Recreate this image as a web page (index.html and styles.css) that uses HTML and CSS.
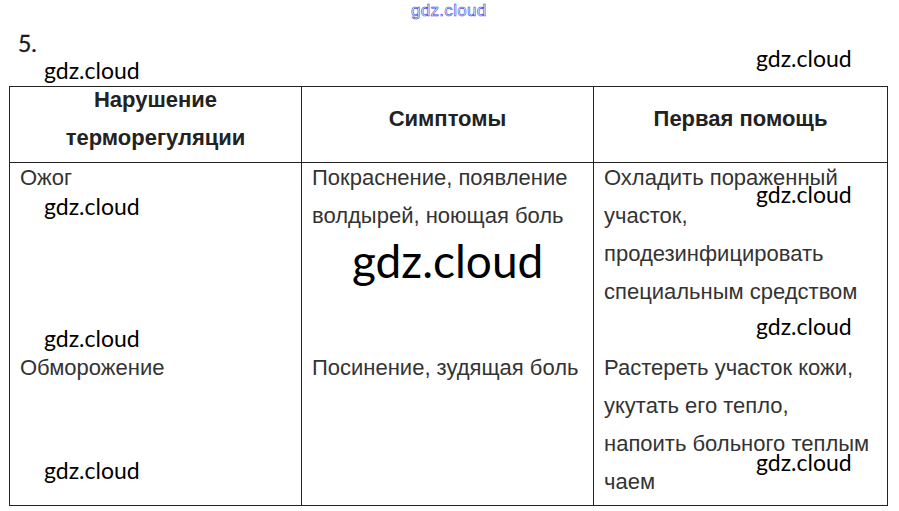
FILE: index.html
```html
<!DOCTYPE html>
<html lang="ru">
<head>
<meta charset="utf-8">
<title>5.</title>
<link rel="stylesheet" href="styles.css">
</head>
<body>
<div class="page">
  <div class="task">5.</div>
  <table class="grid">
    <colgroup><col class="c1"><col class="c2"><col class="c3"></colgroup>
    <thead>
      <tr class="head">
        <th><div class="hin">Нарушение<br>терморегуляции</div></th>
        <th><div class="hin">Симптомы</div></th>
        <th><div class="hin">Первая помощь</div></th>
      </tr>
    </thead>
    <tbody>
      <tr class="r1">
        <td><div class="in">Ожог</div></td>
        <td><div class="in">Покраснение, появление<br>волдырей, ноющая боль</div></td>
        <td><div class="in">Охладить пораженный<br>участок,<br>продезинфицировать<br>специальным средством</div></td>
      </tr>
      <tr class="r2">
        <td><div class="in">Обморожение</div></td>
        <td><div class="in">Посинение, зудящая боль</div></td>
        <td><div class="in">Растереть участок кожи,<br>укутать его тепло,<br>напоить больного теплым<br>чаем</div></td>
      </tr>
    </tbody>
  </table>

  <span class="wm-top">gdz.cloud</span>
  <span class="wm w1">gdz.cloud</span>
  <span class="wm w2">gdz.cloud</span>
  <span class="wm w3">gdz.cloud</span>
  <span class="wm w4">gdz.cloud</span>
  <span class="wm w5">gdz.cloud</span>
  <span class="wm w6">gdz.cloud</span>
  <span class="wm w7">gdz.cloud</span>
  <span class="wm w8">gdz.cloud</span>
  <span class="wm big">gdz.cloud</span>
</div>
</body>
</html>
```

FILE: styles.css
```css
html, body {
  margin: 0;
  padding: 0;
  background: #ffffff;
}
.page {
  position: relative;
  width: 899px;
  height: 511px;
  overflow: hidden;
}
.task {
  font-family: Lato, "Open Sans", sans-serif;
  font-size: 23px;
  color: #1a1a1a;
  padding: 30px 0 0 18px;
  height: 26px;
  line-height: 26px;
  -webkit-text-stroke: 0.3px #1a1a1a;
}
.grid {
  margin: 30px 0 0 9px;
  border-collapse: collapse;
  table-layout: fixed;
  width: 878px;
  font-family: "Liberation Sans", Arial, sans-serif;
  font-size: 22px;
}
.c1 { width: 292px; }
.c2 { width: 292px; }
.c3 { width: 294px; }
.grid th, .grid td {
  border-left: 1px solid #222;
  border-right: 1px solid #222;
  padding: 0 0 0 10px;
}
.head th {
  border-top: 1px solid #222;
  border-bottom: 1px solid #222;
  height: 75px;
  padding: 0;
  text-align: center;
  vertical-align: middle;
  font-weight: bold;
  color: #222;
  line-height: 38px;
}
.hin { margin-top: -12px; }
.grid td {
  vertical-align: top;
  color: #333;
  line-height: 38px;
  white-space: nowrap;
}
.in { margin-top: -4px; }
.r1 td { height: 190px; }
.r2 td { height: 152px; border-bottom: 1px solid #222; }

.wm {
  position: absolute;
  font-family: Lato, "Open Sans", sans-serif;
  font-size: 23px;
  line-height: 26px;
  color: #000;
  white-space: nowrap;
}
.w1 { left: 44px; top: 57px; }
.w2 { left: 756px; top: 45px; }
.w3 { left: 44px; top: 193px; }
.w4 { left: 756px; top: 181px; }
.w5 { left: 44px; top: 325px; }
.w6 { left: 756px; top: 313px; }
.w7 { left: 44px; top: 457px; }
.w8 { left: 756px; top: 449px; }
.big {
  left: 352px;
  top: 234px;
  font-size: 46px;
  line-height: 54px;
}
.wm-top {
  position: absolute;
  left: 411px;
  top: 0px;
  font-family: "Liberation Sans", Arial, sans-serif;
  font-size: 17px;
  line-height: 22px;
  color: #ffffff;
  -webkit-text-stroke: 0.6px #3b3bd6;
  letter-spacing: 0.3px;
}
```
